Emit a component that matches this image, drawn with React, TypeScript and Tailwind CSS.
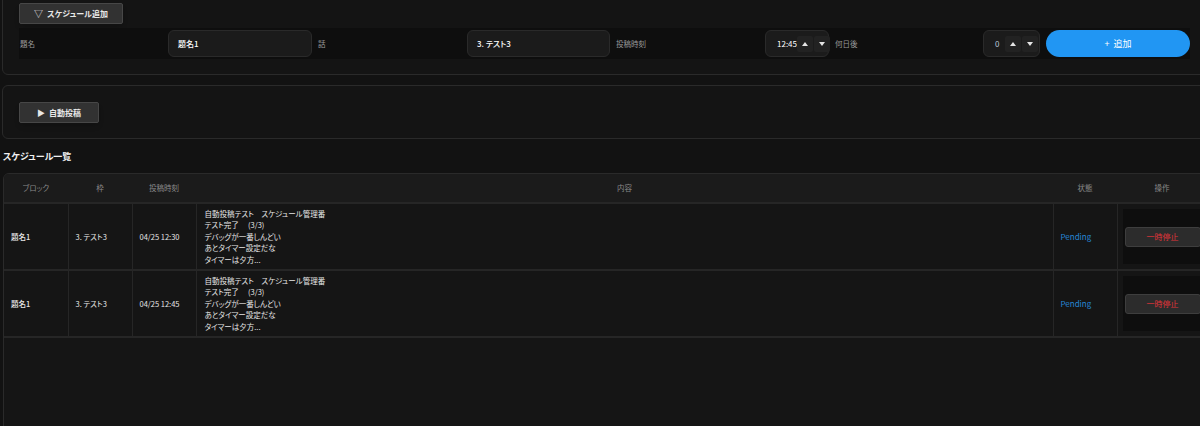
import React from "react";

const rows = [
    { block: "題名1", slot: "3. テスト3", time: "04/25 12:30" },
    { block: "題名1", slot: "3. テスト3", time: "04/25 12:45" },
];

const content = [
    "自動投稿テスト　スケジュール管理番",
    "テスト完了　 (3/3)",
    "デバッグが一番しんどい",
    "あとタイマー設定だな",
    "タイマーは夕方...",
];

function Spin() {
    return (
        <div className="flex items-center gap-px">
            <span className="w-[16px] h-[16px] bg-[#222222] rounded-[2px] flex items-center justify-center">
                <svg width="6" height="4" viewBox="0 0 6 4"><path d="M0 4 L3 0 L6 4 Z" fill="#e5e5e5" /></svg>
            </span>
            <span className="w-[16px] h-[16px] bg-[#222222] rounded-[2px] flex items-center justify-center">
                <svg width="6" height="4" viewBox="0 0 6 4"><path d="M0 0 L3 4 L6 0 Z" fill="#e5e5e5" /></svg>
            </span>
        </div>
    );
}

export default function App() {
    return (
        <div className="w-[1200px] h-[426px] overflow-hidden bg-[#121212] text-white font-['Noto_Sans_CJK_JP','Noto_Sans',sans-serif] [font-feature-settings:'palt']">
            {/* schedule add panel */}
            <div className="mt-[-14px] ml-[2px] w-[1210px] border border-[#2a2a2a] rounded-md bg-[#141414] pt-4 pb-[15px] pl-4">
                <button className="h-[21px] w-[104px] bg-[#323232] border border-[#474747] rounded-[2px] shadow-md text-[8px] font-bold text-[#e8e8e8] flex items-center justify-center gap-1">
                    <span className="text-[9px] font-normal">▽</span>スケジュール追加
                </button>
                <div className="mt-[4px] w-[1171px] h-[31px] bg-[#0e0e0e] flex items-center gap-[6px]">
                    <span className="w-[143px] text-[7.5px] text-[#9a9a9a] pl-[1px]">題名</span>
                    <div className="w-[144px] h-[27px] bg-[#1b1b1b] border border-[#2a2a2a] rounded-md flex items-center pl-[9px] text-[8px] font-medium">題名1</div>
                    <span className="w-[143px] text-[7.5px] text-[#9a9a9a]">話</span>
                    <div className="w-[143px] h-[27px] bg-[#1b1b1b] border border-[#2a2a2a] rounded-md flex items-center pl-[9px] text-[8px] font-medium">3. テスト3</div>
                    <span className="w-[143px] text-[7.5px] text-[#9a9a9a]">投稿時刻</span>
                    <div className="w-[64px] h-[27px] bg-[#1b1b1b] border border-[#2a2a2a] rounded-md flex items-center pl-[11px] gap-[1px] text-[8px]">
                        <span className="w-[19px]">12:45</span>
                        <Spin />
                    </div>
                    <span className="w-[142px] text-[7.5px] text-[#9a9a9a]">何日後</span>
                    <div className="w-[57px] h-[27px] bg-[#1b1b1b] border border-[#2a2a2a] rounded-md flex items-center pl-[11px] gap-[6px] text-[8px] text-[#b8c8d8]">
                        <span>0</span>
                        <Spin />
                    </div>
                    <button className="w-[144px] h-[27px] bg-[#2196f3] rounded-full text-[9px] text-white flex items-center justify-center gap-1">
                        <span>+</span>追加
                    </button>
                </div>
            </div>

            {/* auto post panel */}
            <div className="mt-[10px] ml-[2px] w-[1210px] border border-[#2a2a2a] rounded-md bg-[#141414] pt-4 pb-[15px] pl-4">
                <button className="h-[21px] w-[80px] bg-[#323232] border border-[#474747] rounded-[2px] shadow-md text-[8px] font-bold text-[#e8e8e8] flex items-center justify-center gap-1">
                    <span className="text-[8px] font-normal">▶</span>自動投稿
                </button>
            </div>

            <h2 className="mt-[11px] ml-[3px] text-[9px] font-bold text-[#f0f0f0] leading-[14px]">スケジュール一覧</h2>

            {/* schedule table */}
            <div className="mt-[9px] ml-[3px] w-[1210px] h-[300px] border border-[#2a2a2a] rounded-tl-md bg-[#151515] overflow-hidden">
                <table className="table-fixed border-collapse text-[7.5px]">
                    <colgroup>
                        <col className="w-[64px]" />
                        <col className="w-[64px]" />
                        <col className="w-[64px]" />
                        <col className="w-[857px]" />
                        <col className="w-[64px]" />
                        <col className="w-[90px]" />
                    </colgroup>
                    <thead>
                        <tr className="h-[29px] bg-[#1b1b1b] border-b-2 border-[#262626] text-[#8a8a8a]">
                            <th className="font-normal">ブロック</th>
                            <th className="font-normal">枠</th>
                            <th className="font-normal">投稿時刻</th>
                            <th className="font-normal">内容</th>
                            <th className="font-normal">状態</th>
                            <th className="font-normal">操作</th>
                        </tr>
                    </thead>
                    <tbody>
                        {rows.map((r, i) => (
                            <tr key={i} className="h-[65px] border-b-2 border-[#262626] text-[#e6e6e6]">
                                <td className="pl-[7px] border-r border-[#262626] font-medium">{r.block}</td>
                                <td className="pl-[7px] border-r border-[#262626]">{r.slot}</td>
                                <td className="pl-[7px] border-r border-[#262626]">{r.time}</td>
                                <td className="pl-[8px] border-r border-[#262626] leading-[11.4px]">
                                    {content.map((line, j) => (
                                        <div key={j} className="whitespace-pre">{line}</div>
                                    ))}
                                </td>
                                <td className="pl-[7px] border-r border-[#262626] text-[#2688d8] text-[8px]">Pending</td>
                                <td className="p-[5px]">
                                    <div className="h-[55px] bg-[#0e0e0e] flex items-center pl-[2px]">
                                        <button className="w-[76px] h-[20px] bg-[#2c2c2c] border border-[#3e3e3e] rounded-[3px] text-[#e0343a] text-[8px]">
                                            一時停止
                                        </button>
                                    </div>
                                </td>
                            </tr>
                        ))}
                    </tbody>
                </table>
            </div>
        </div>
    );
}
